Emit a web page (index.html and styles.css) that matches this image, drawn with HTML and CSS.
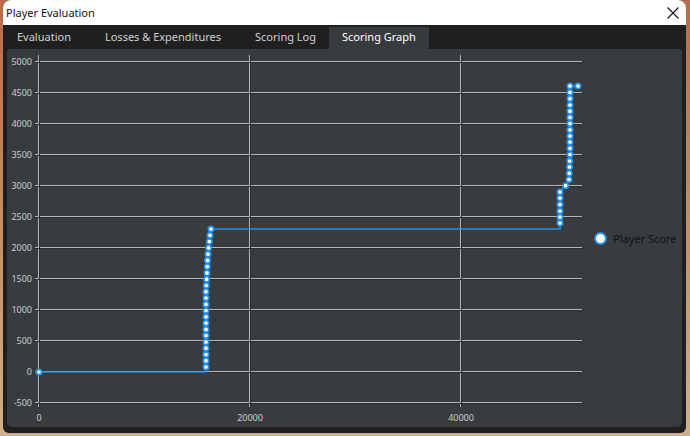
FILE: index.html
```html
<!DOCTYPE html>
<html lang="en">
<head>
    <meta charset="UTF-8">
    <meta name="viewport" content="width=device-width, initial-scale=1.0">
    <title>Player Evaluation</title>
    <link rel="stylesheet" href="styles.css">
</head>
<body>

<div class="window">
    <div class="titlebar">
        <span class="title">Player Evaluation</span>
        <svg class="close" width="12" height="12" viewBox="0 0 12 12">
            <path d="M0.5 0.5 L11.5 11.5 M11.5 0.5 L0.5 11.5" stroke="#111" stroke-width="1.1" fill="none"/>
        </svg>
    </div>

    <div class="frame">
        <div class="tabs">
            <div class="tab">Evaluation</div>
            <div class="tab">Losses &amp; Expenditures</div>
            <div class="tab">Scoring Log</div>
            <div class="tab active">Scoring Graph</div>
        </div>

        <div class="panel">
            <svg class="chart" width="585" height="378">
                <g transform="translate(-7 -49)">
                    <!-- horizontal grid -->
                    <g class="grid-light">
                        <path d="M35 61.5H582 M35 92.5H582 M35 123.5H582 M35 154.5H582 M35 185.5H582 M35 216.5H582 M35 247.5H582 M35 278.5H582 M35 309.5H582 M35 340.5H582 M35 371.5H582 M35 402.5H582"/>
                        <path d="M38.5 55V407 M249.5 55V407 M460.5 55V407"/>
                    </g>
                    <g class="grid-dark">
                        <path d="M35 62.5H582 M35 93.5H582 M35 124.5H582 M35 155.5H582 M35 186.5H582 M35 217.5H582 M35 248.5H582 M35 279.5H582 M35 310.5H582 M35 341.5H582 M35 372.5H582 M35 403.5H582"/>
                        <path d="M39.5 55V407 M250.5 55V407 M461.5 55V407"/>
                    </g>

                    <g class="ylabels">
                        <text x="32" y="64.5">5000</text>
                        <text x="32" y="95.5">4500</text>
                        <text x="32" y="126.5">4000</text>
                        <text x="32" y="157.5">3500</text>
                        <text x="32" y="188.5">3000</text>
                        <text x="32" y="219.5">2500</text>
                        <text x="32" y="250.5">2000</text>
                        <text x="32" y="281.5">1500</text>
                        <text x="32" y="312.5">1000</text>
                        <text x="32" y="343.5">500</text>
                        <text x="32" y="374.5">0</text>
                        <text x="32" y="405.5">-500</text>
                    </g>
                    <g class="xlabels">
                        <text x="39" y="420.5">0</text>
                        <text x="250" y="420.5">20000</text>
                        <text x="461" y="420.5">40000</text>
                    </g>

                    <polyline class="series" points="39,372 205.5,372 206,367 206,360.7 206,354.5 206,348.2 206,341.9 206,335.6 206,329.4 206,323.1 206,316.8 206,310.5 206,304.3 206,298 206,291.7 206.3,285.5 206.6,279.2 207,272.9 207.3,266.6 207.6,260.4 208,254.1 208.6,247.8 209.3,241.5 210,235.3 211,229 560,229 560,223 560,217 560,211 560,204.5 560,198 560,192 565.6,185.7 569,179.5 569.3,173.3 569.5,167 569.7,161 570,154.5 570,148.3 570,142 570,136 570,129.8 570,123.6 570,117.4 570,111.2 570,105 570,98.7 570,92.4 570,86 578,86"/>

                    <g class="points">
                        <circle cx="39" cy="372"/>
                        <circle cx="206" cy="367"/><circle cx="206" cy="360.7"/><circle cx="206" cy="354.5"/><circle cx="206" cy="348.2"/>
                        <circle cx="206" cy="341.9"/><circle cx="206" cy="335.6"/><circle cx="206" cy="329.4"/><circle cx="206" cy="323.1"/>
                        <circle cx="206" cy="316.8"/><circle cx="206" cy="310.5"/><circle cx="206" cy="304.3"/><circle cx="206" cy="298"/>
                        <circle cx="206" cy="291.7"/><circle cx="206.3" cy="285.5"/><circle cx="206.6" cy="279.2"/><circle cx="207" cy="272.9"/>
                        <circle cx="207.3" cy="266.6"/><circle cx="207.6" cy="260.4"/><circle cx="208" cy="254.1"/><circle cx="208.6" cy="247.8"/>
                        <circle cx="209.3" cy="241.5"/><circle cx="210" cy="235.3"/><circle cx="211" cy="229"/>
                        <circle cx="560" cy="223"/><circle cx="560" cy="217"/><circle cx="560" cy="211"/><circle cx="560" cy="204.5"/>
                        <circle cx="560" cy="198"/><circle cx="560" cy="192"/><circle cx="565.6" cy="185.7"/><circle cx="569" cy="179.5"/>
                        <circle cx="569.3" cy="173.3"/><circle cx="569.5" cy="167"/><circle cx="569.7" cy="161"/><circle cx="570" cy="154.5"/>
                        <circle cx="570" cy="148.3"/><circle cx="570" cy="142"/><circle cx="570" cy="136"/><circle cx="570" cy="129.8"/>
                        <circle cx="570" cy="123.6"/><circle cx="570" cy="117.4"/><circle cx="570" cy="111.2"/><circle cx="570" cy="105"/>
                        <circle cx="570" cy="98.7"/><circle cx="570" cy="92.4"/><circle cx="570" cy="86"/><circle cx="578" cy="86"/>
                    </g>
                </g>
            </svg>

            <div class="legend">
                <span class="legend-dot"></span>
                <span class="legend-label">Player Score</span>
            </div>
        </div>
    </div>
</div>

</body>
</html>
```

FILE: styles.css
```css
body {
    margin: 0;
    padding: 0 4px 0 3px;
    height: 436px;
    overflow: hidden;
    font-family: 'Noto Sans', sans-serif;
    background: linear-gradient(to bottom, #b86c4c 0%, #c08a62 45%, #cdb089 100%);
}
.window {
    height: 433px;
    display: flex;
    flex-direction: column;
    border-radius: 8px 8px 6px 6px;
    overflow: hidden;
    background-color: #1f1f1f;
}
.titlebar {
    height: 25px;
    flex: none;
    background-color: #fff;
    display: flex;
    align-items: center;
    justify-content: space-between;
    padding: 0 7px 0 3px;
}
.title {
    font-size: 11px;
    color: #111;
}
.close {
    display: block;
    margin-top: 1px;
}
.frame {
    flex: 1;
    display: flex;
    flex-direction: column;
    padding: 0 4px 6px 4px;
}
.tabs {
    height: 24px;
    flex: none;
    display: flex;
    align-items: stretch;
    padding-top: 2px;
    box-sizing: border-box;
}
.tab {
    padding: 0 13px;
    margin-right: 8px;
    font-size: 11px;
    color: #cfd2d5;
    display: flex;
    align-items: center;
    padding-bottom: 3px;
}
.tab:first-child {
    padding-left: 10px;
}
.tab.active {
    margin-left: -8px;
    background-color: #383b3e;
    color: #fff;
}
.panel {
    flex: 1;
    display: flex;
    align-items: center;
    background-color: #393c3f;
    border-radius: 2px 2px 5px 5px;
}
.chart {
    display: block;
    flex: none;
    align-self: flex-start;
}
.grid-light path {
    stroke: #b8b8b8;
    stroke-width: 1;
    fill: none;
}
.grid-dark path {
    stroke: #2a2c2e;
    stroke-width: 1;
    fill: none;
}
.ylabels text,
.xlabels text {
    font-size: 9px;
    fill: #c6cdd4;
}
.ylabels text {
    text-anchor: end;
}
.xlabels text {
    text-anchor: middle;
}
.series {
    fill: none;
    stroke: #2490ea;
    stroke-width: 1.6;
}
.points circle {
    r: 2.7px;
    fill: #fff;
    stroke: #2490ea;
    stroke-width: 1.7;
}
.legend {
    display: flex;
    align-items: center;
    padding-left: 2px;
}
.legend-dot {
    width: 9px;
    height: 9px;
    border-radius: 50%;
    background-color: #fff;
    border: 2px solid #2490ea;
}
.legend-label {
    margin-left: 6px;
    font-size: 11px;
    color: #111;
}
```
